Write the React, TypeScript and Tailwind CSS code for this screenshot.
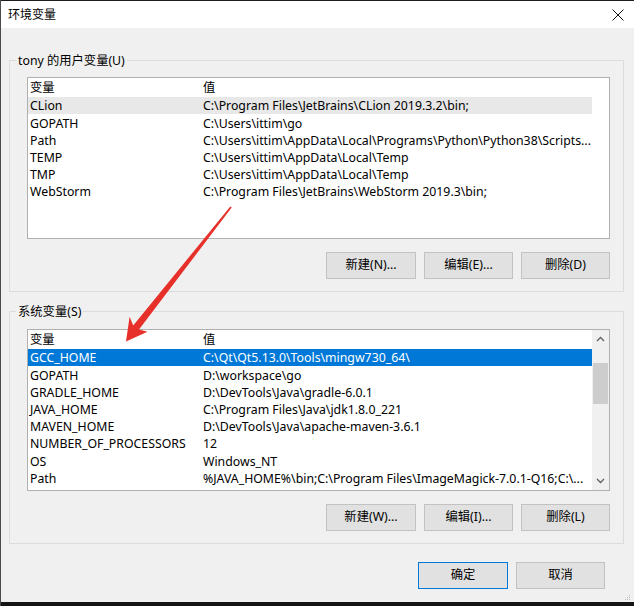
import React from 'react';

type Row = [string, string];

const userVars: Row[] = [
  ['CLion', 'C:\\Program Files\\JetBrains\\CLion 2019.3.2\\bin;'],
  ['GOPATH', 'C:\\Users\\ittim\\go'],
  ['Path', 'C:\\Users\\ittim\\AppData\\Local\\Programs\\Python\\Python38\\Scripts...'],
  ['TEMP', 'C:\\Users\\ittim\\AppData\\Local\\Temp'],
  ['TMP', 'C:\\Users\\ittim\\AppData\\Local\\Temp'],
  ['WebStorm', 'C:\\Program Files\\JetBrains\\WebStorm 2019.3\\bin;'],
];

const systemVars: Row[] = [
  ['GCC_HOME', 'C:\\Qt\\Qt5.13.0\\Tools\\mingw730_64\\'],
  ['GOPATH', 'D:\\workspace\\go'],
  ['GRADLE_HOME', 'D:\\DevTools\\Java\\gradle-6.0.1'],
  ['JAVA_HOME', 'C:\\Program Files\\Java\\jdk1.8.0_221'],
  ['MAVEN_HOME', 'D:\\DevTools\\Java\\apache-maven-3.6.1'],
  ['NUMBER_OF_PROCESSORS', '12'],
  ['OS', 'Windows_NT'],
  ['Path', '%JAVA_HOME%\\bin;C:\\Program Files\\ImageMagick-7.0.1-Q16;C:\\...'],
];

const Chevron = ({ up }: { up?: boolean }) => (
  <svg width="9" height="6" viewBox="0 0 9 6">
    <path
      d={up ? 'M1 5 L4.5 1.5 L8 5' : 'M1 1 L4.5 4.5 L8 1'}
      fill="none"
      stroke="#606060"
      strokeWidth="1.3"
    />
  </svg>
);

// list view with a header and fixed-height rows
const VarList = ({
  rows,
  selected,
  focused,
  scrollbar,
}: {
  rows: Row[];
  selected: number;
  focused?: boolean;
  scrollbar?: boolean;
}) => (
  <div className="flex h-[162px] w-[583px] border border-[#b0b0b0] bg-white">
    <div className="flex w-[564px] flex-col">
      <div className="flex h-[19px] shrink-0 items-center pt-[2px]">
        <div className="w-[173px] pl-[2px]">变量</div>
        <div className="pl-[2px]">值</div>
      </div>
      {rows.map(([name, value], i) => {
        const sel = i === selected;
        const rowCls = sel
          ? focused
            ? 'bg-[#0078d7] text-white'
            : 'bg-[#e8e8e8]'
          : '';
        return (
          <div key={name + i} className={`flex h-[17.2px] shrink-0 items-center pt-[2px] ${rowCls}`}>
            <div className="w-[173px] shrink-0 overflow-hidden whitespace-nowrap pl-[2px]">{name}</div>
            <div className="flex-1 overflow-hidden whitespace-nowrap pl-[2px]">{value}</div>
          </div>
        );
      })}
    </div>
    {scrollbar && (
      <div className="flex w-[17px] flex-col items-center bg-[#f0f0f0]">
        <div className="flex h-[18px] w-full items-center justify-center">
          <Chevron up />
        </div>
        <div className="w-full flex-1 pt-[15px]">
          <div className="mx-auto h-[41px] w-[15px] bg-[#cdcdcd]" />
        </div>
        <div className="flex h-[18px] w-full items-center justify-center">
          <Chevron />
        </div>
      </div>
    )}
  </div>
);

const Btn = ({ label, primary, w = 'w-[89px]' }: { label: string; primary?: boolean; w?: string }) => (
  <button
    className={`flex h-[27px] ${w} items-center justify-center border bg-[#e1e1e1] ${
      primary ? 'border-[#0078d7]' : 'border-[#c2c2c2]'
    }`}
  >
    {label}
  </button>
);

const Group = ({ title, children }: { title: string; children: React.ReactNode }) => (
  <fieldset className="ml-[8px] mr-[10px] border border-[#dcdcdc] pb-[12px] pl-[17px] pr-[12px]">
    <legend className="-ml-[11px] h-[16px] px-[2px] pt-[1px] leading-[16px]">{title}</legend>
    {children}
  </fieldset>
);

export default function App() {
  return (
    <div
      className="relative flex h-[606px] w-[634px] flex-col overflow-hidden border-l border-[#4a4a4a] bg-[#f0f0f0] text-[12.3px] text-black"
      style={{ fontFamily: '"Segoe UI", "Noto Sans", "Noto Sans CJK SC", sans-serif' }}
    >
      <div className="h-px shrink-0 bg-[#1e1e1e]" />
      {/* title bar */}
      <div className="flex h-[27px] shrink-0 items-center justify-between bg-white pl-[7px] pr-[10px]">
        <span className="text-[12px]">环境变量</span>
        <svg width="12" height="12" viewBox="0 0 12 12">
          <path d="M0.5 0.5 L11.5 11.5 M11.5 0.5 L0.5 11.5" stroke="#111" strokeWidth="1" fill="none" />
        </svg>
      </div>

      <div className="flex flex-1 flex-col pt-[24px]">
        <Group title="tony 的用户变量(U)">
          <div className="mt-[9px]">
            <VarList rows={userVars} selected={0} />
          </div>
          <div className="mt-[13px] flex justify-end gap-[8px] pr-[1px]">
            <Btn label="新建(N)..." w="w-[90px]" />
            <Btn label="编辑(E)..." />
            <Btn label="删除(D)" />
          </div>
        </Group>

        <div className="mt-[11px]">
          <Group title="系统变量(S)">
            <div className="mt-[10px]">
              <VarList rows={systemVars} selected={0} focused scrollbar />
            </div>
            <div className="mt-[13px] flex justify-end gap-[8px] pr-[1px]">
              <Btn label="新建(W)..." w="w-[90px]" />
              <Btn label="编辑(I)..." />
              <Btn label="删除(L)" />
            </div>
          </Group>
        </div>

        <div className="mt-[18px] flex justify-end gap-[8px] pr-[29px]">
          <Btn label="确定" primary w="w-[90px]" />
          <Btn label="取消" />
        </div>
      </div>

      {/* size grip */}
      <div className="flex h-[8px] shrink-0 justify-end pr-[3px]">
        <svg width="7" height="7" viewBox="0 0 7 7">
          <rect x="5" y="1" width="1" height="1" fill="#bdbdbd" />
          <rect x="3" y="3" width="1" height="1" fill="#bdbdbd" />
          <rect x="5" y="3" width="1" height="1" fill="#bdbdbd" />
          <rect x="1" y="5" width="1" height="1" fill="#bdbdbd" />
          <rect x="3" y="5" width="1" height="1" fill="#bdbdbd" />
          <rect x="5" y="5" width="1" height="1" fill="#bdbdbd" />
        </svg>
      </div>
      <div className="h-[4px] shrink-0 bg-[#141414]" />

      {/* red annotation arrow */}
      <svg className="pointer-events-none absolute left-0 top-0" width="634" height="606" viewBox="0 0 634 606">
        <polygon
          points="229.3,206.5 230.7,207.5 138,329.6 146.5,331.8 125,341.5 128.6,316.8 132.2,325.4"
          fill="#e8302a"
        />
      </svg>
    </div>
  );
}
